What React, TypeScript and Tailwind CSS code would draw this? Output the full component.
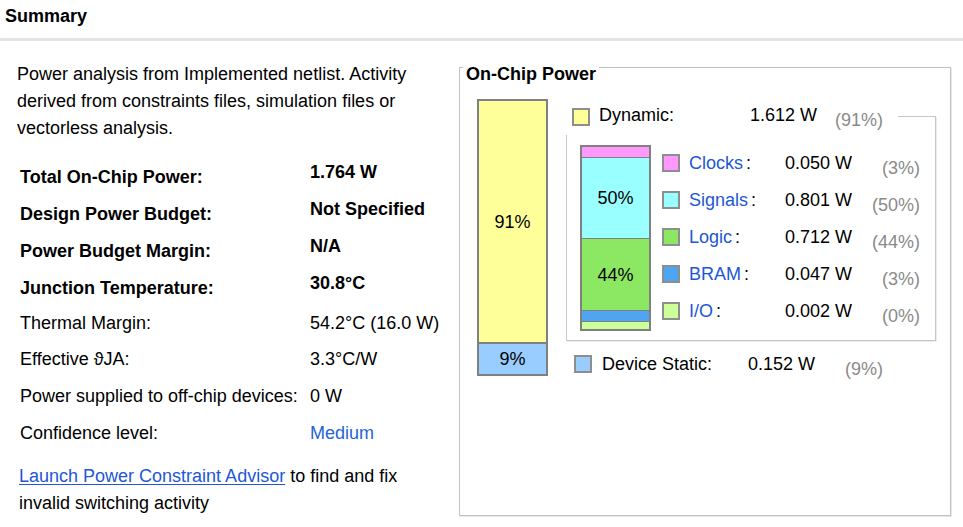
import React from 'react';

const font = "font-['Liberation_Sans',Arial,sans-serif]";

interface Row {
    label: string;
    value: string;
    bold?: boolean;
    blue?: boolean;
    h: string;
}

const rows: Row[] = [
    { label: 'Total On-Chip Power:', value: '1.764 W', bold: true, h: 'h-[37px]' },
    { label: 'Design Power Budget:', value: 'Not Specified', bold: true, h: 'h-[37px]' },
    { label: 'Power Budget Margin:', value: 'N/A', bold: true, h: 'h-[37px]' },
    { label: 'Junction Temperature:', value: '30.8°C', bold: true, h: 'h-[37px]' },
    { label: 'Thermal Margin:', value: '54.2°C (16.0 W)', h: 'h-[34px]' },
    { label: 'Effective ϑJA:', value: '3.3°C/W', h: 'h-[37px]' },
    { label: 'Power supplied to off-chip devices:', value: '0 W', h: 'h-[37px]' },
    { label: 'Confidence level:', value: 'Medium', blue: true, h: 'h-[37px]' },
];

interface Item {
    name: string;
    value: string;
    pct: string;
    swatch: string;
}

const items: Item[] = [
    { name: 'Clocks', value: '0.050 W', pct: '(3%)', swatch: 'bg-[#ff99ff]' },
    { name: 'Signals', value: '0.801 W', pct: '(50%)', swatch: 'bg-[#99ffff]' },
    { name: 'Logic', value: '0.712 W', pct: '(44%)', swatch: 'bg-[#8ce862]' },
    { name: 'BRAM', value: '0.047 W', pct: '(3%)', swatch: 'bg-[#4ea6f2]' },
    { name: 'I/O', value: '0.002 W', pct: '(0%)', swatch: 'bg-[#ccff99]' },
];

function Swatch({ color }: { color: string }) {
    return <div className={`w-[18px] h-[18px] shrink-0 border-2 border-[#8e8e8e] ${color}`} />;
}

export default function App() {
    return (
        <div className={`w-[963px] h-[527px] bg-white text-black text-[18px] overflow-hidden ${font}`}>
            {/* Header */}
            <div className="h-[41px] border-b-[3px] border-[#e4e4e4] pl-[5px] pt-[6px]">
                <div className="font-bold text-[18px] leading-[20px]">Summary</div>
            </div>

            <div className="flex">
                {/* Left column */}
                <div className="w-[459px] shrink-0 pl-[17px] pt-[20px]">
                    <p className="leading-[27px]">
                        Power analysis from Implemented netlist. Activity
                        <br />
                        derived from constraints files, simulation files or
                        <br />
                        vectorless analysis.
                    </p>

                    <div className="mt-[16px] ml-[3px]">
                        {rows.map(r => (
                            <div key={r.label} className={`flex items-center ${r.h}`}>
                                <div className={`w-[290px] leading-[20px] ${r.bold ? 'font-bold' : ''}`}>{r.label}</div>
                                <div
                                    className={`leading-[20px] ${r.bold ? 'font-bold pb-[9px]' : ''} ${r.blue ? 'text-[#2563d9]' : ''}`}
                                >
                                    {r.value}
                                </div>
                            </div>
                        ))}
                    </div>

                    <p className="mt-[12px] ml-[2px] leading-[27px]">
                        <span className="text-[#2157d6] underline underline-offset-[2px]">Launch Power Constraint Advisor</span> to find and fix
                        <br />
                        invalid switching activity
                    </p>
                </div>

                {/* On-Chip Power box */}
                <div className="mt-[26px] w-[492px] h-[449px] border border-[#c2c2c2] shadow-[1px_1px_0_#e8e8e8]">
                    <div className="-mt-[4px] ml-[3px] w-fit px-[3px] bg-white font-bold leading-[20px]">On-Chip Power</div>

                    <div className="flex items-start">
                        {/* Total bar */}
                        <div className="ml-[17px] mt-[15px] w-[71px] h-[277px] border-2 border-[#808080] flex flex-col">
                            <div className="h-[241px] bg-[#ffff99] flex items-center justify-center leading-[20px]">91%</div>
                            <div className="flex-1 bg-[#99ccff] border-t-2 border-[#808080] flex items-center justify-center leading-[20px]">9%</div>
                        </div>

                        {/* Breakdown */}
                        <div className="ml-[18px] mt-[32px]">
                            <div className="w-[370px] h-[225px] border border-[#c6c6c6] shadow-[1px_1px_0_#ececec]">
                                <div className="-mt-[13px] -ml-[1px] w-[332px] h-[31px] bg-white flex items-start pl-[6px]">
                                    <div className="mt-[4px]">
                                        <Swatch color="bg-[#ffff99]" />
                                    </div>
                                    <div className="ml-[9px] mt-[1px] w-[151px] leading-[20px]">Dynamic:</div>
                                    <div className="mt-[1px] w-[85px] leading-[20px]">1.612 W</div>
                                    <div className="mt-[6px] leading-[20px] text-[#8a8a8a]">(91%)</div>
                                </div>

                                <div className="flex items-start">
                                    <div className="ml-[13px] mt-[10px] w-[71px] h-[186px] border-2 border-[#808080] flex flex-col">
                                        <div className="h-[10px] bg-[#ff99ff]" />
                                        <div className="h-[81px] bg-[#99ffff] border-t border-[#808080] flex items-center justify-center leading-[20px]">50%</div>
                                        <div className="h-[72px] bg-[#8ce862] border-t border-[#808080] flex items-center justify-center leading-[20px]">44%</div>
                                        <div className="h-[11px] bg-[#4ea6f2] border-t border-[#808080]" />
                                        <div className="flex-1 bg-[#ccff99] border-t border-[#808080]" />
                                    </div>

                                    <div className="ml-[11px] mt-[9px] flex flex-col">
                                        {items.map(it => (
                                            <div key={it.name} className="h-[37px] flex items-center">
                                                <Swatch color={it.swatch} />
                                                <div className="ml-[9px] w-[96px] leading-[20px]">
                                                    <span className="text-[#2157d6]">{it.name}</span>
                                                    <span className="ml-[3px]">:</span>
                                                </div>
                                                <div className="w-[80px] leading-[20px]">{it.value}</div>
                                                <div className="w-[55px] mt-[10px] text-right leading-[20px] text-[#8a8a8a]">{it.pct}</div>
                                            </div>
                                        ))}
                                    </div>
                                </div>
                            </div>

                            <div className="mt-[8px] h-[30px] flex items-center pl-[8px]">
                                <Swatch color="bg-[#99ccff]" />
                                <div className="ml-[10px] w-[146px] leading-[20px]">Device Static:</div>
                                <div className="w-[97px] leading-[20px]">0.152 W</div>
                                <div className="mt-[10px] leading-[20px] text-[#8a8a8a]">(9%)</div>
                            </div>
                        </div>
                    </div>
                </div>
            </div>
        </div>
    );
}
